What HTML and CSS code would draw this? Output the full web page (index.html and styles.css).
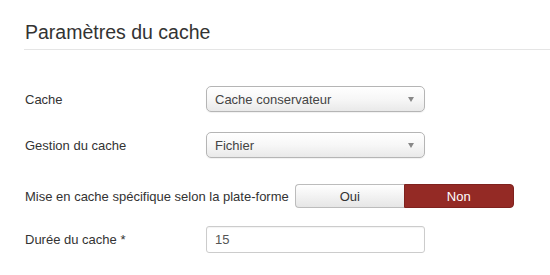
FILE: index.html
```html
<!DOCTYPE html>
<html lang="fr">
<head>
<meta charset="utf-8">
<link rel="stylesheet" href="styles.css">
</head>
<body>
<div class="page">
  <h2 class="title">Paramètres du cache</h2>
  <div class="form">
    <div class="row row1">
      <label class="label">Cache</label>
      <div class="select"><span>Cache conservateur</span><i class="arrow"></i></div>
    </div>
    <div class="row row2">
      <label class="label">Gestion du cache</label>
      <div class="select"><span>Fichier</span><i class="arrow"></i></div>
    </div>
    <div class="row row3">
      <label class="label">Mise en cache spécifique selon la plate-forme</label>
      <div class="toggle">
        <span class="btn oui">Oui</span>
        <span class="btn non">Non</span>
      </div>
    </div>
    <div class="row row4">
      <label class="label">Durée du cache *</label>
      <div class="input">15</div>
    </div>
  </div>
</div>
</body>
</html>
```

FILE: styles.css
```css
html, body {
  margin: 0;
  padding: 0;
  background: #fff;
}
body {
  font-family: "Liberation Sans", Arial, sans-serif;
  font-size: 13px;
  color: #333;
}
.page {
  padding: 0 0 0 24px;
}
.title {
  margin: 0;
  padding: 20px 0 0 1px;
  height: 29px;
  font-size: 19.5px;
  font-weight: normal;
  line-height: 24px;
  color: #333;
  border-bottom: 1px solid #e5e5e5;
}
.form {
  padding-left: 1px;
}
.row {
  display: flex;
  align-items: center;
}
.row1 { margin-top: 36px; height: 26px; }
.row2 { margin-top: 20px; height: 26px; }
.row3 { margin-top: 26px; height: 24px; }
.row4 { margin-top: 18px; height: 27px; }
.label {
  min-width: 175px;
  margin-right: 6px;
  white-space: nowrap;
  color: #333;
}
.select {
  box-sizing: border-box;
  width: 219px;
  height: 26px;
  border: 1px solid #b5b5b5;
  border-radius: 5px;
  background: linear-gradient(#ffffff 0%, #f7f7f7 50%, #e9e9e9 100%);
  box-shadow: 0 1px 1px rgba(0,0,0,0.06);
  display: flex;
  align-items: center;
  justify-content: space-between;
  padding: 0 10px 0 8px;
  color: #444;
}
.arrow {
  width: 0;
  height: 0;
  border-left: 3.5px solid transparent;
  border-right: 3.5px solid transparent;
  border-top: 5px solid #888;
  margin-top: 1px;
}
.toggle {
  display: flex;
  height: 24px;
  width: 219px;
}
.btn {
  box-sizing: border-box;
  flex: 1 1 0;
  display: flex;
  align-items: center;
  justify-content: center;
  height: 24px;
}
.oui {
  border: 1px solid #bcbcbc;
  border-right: none;
  border-radius: 4px 0 0 4px;
  background: linear-gradient(#ffffff, #e6e6e6);
  color: #333;
}
.non {
  background: #942a25;
  border: 1px solid #7f221e;
  border-radius: 0 4px 4px 0;
  color: #fff;
}
.input {
  box-sizing: border-box;
  width: 219px;
  height: 27px;
  border: 1px solid #cccccc;
  border-radius: 3px;
  display: flex;
  align-items: center;
  padding-left: 8px;
  color: #555;
  box-shadow: inset 0 1px 1px rgba(0,0,0,0.05);
}
```
